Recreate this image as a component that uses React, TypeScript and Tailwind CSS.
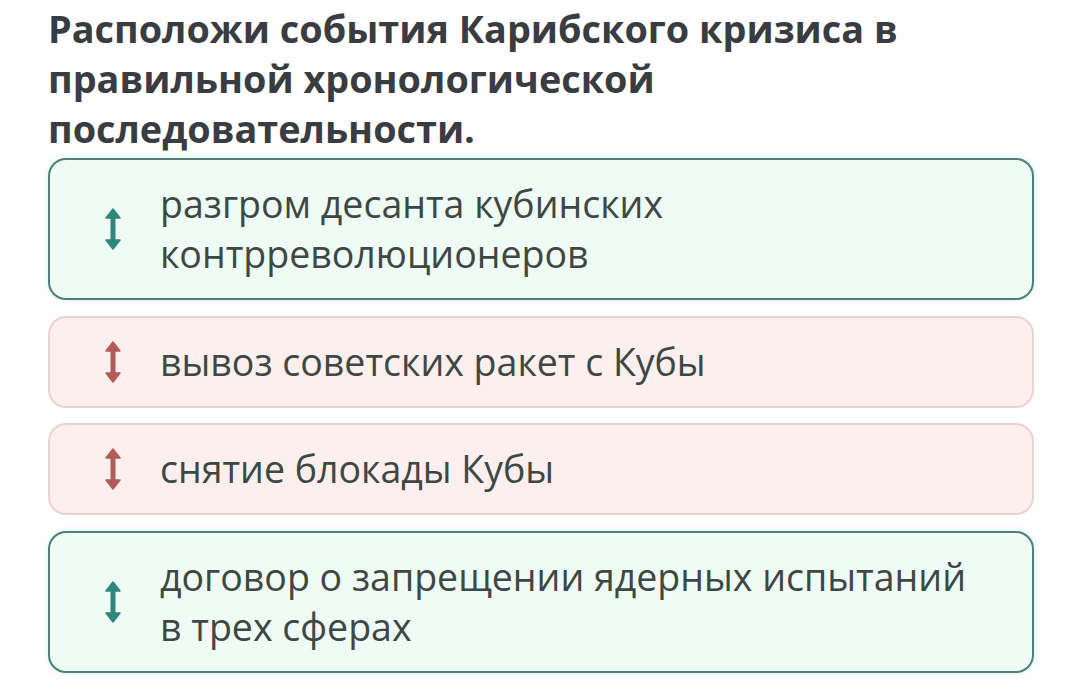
import type React from "react"

type Tone = "green" | "red"

interface Item {
  text: string
  tone: Tone
}

const items: Item[] = [
  { text: "разгром десанта кубинских контрреволюционеров", tone: "green" },
  { text: "вывоз советских ракет с Кубы", tone: "red" },
  { text: "снятие блокады Кубы", tone: "red" },
  { text: "договор о запрещении ядерных испытаний в трех сферах", tone: "green" },
]

// vertical double arrow used as drag handle
const DragArrow: React.FC<{ color: string }> = ({ color }) => (
  <svg width="18" height="42" viewBox="0 0 18 42" fill={color}>
    <rect x="6.5" y="8" width="5" height="26" rx="1" />
    <path d="M9 1 L16 10 L2 10 Z" strokeLinejoin="round" stroke={color} strokeWidth="1.5" />
    <path d="M9 41 L16 32 L2 32 Z" strokeLinejoin="round" stroke={color} strokeWidth="1.5" />
  </svg>
)

const Card: React.FC<{ item: Item }> = ({ item }) => {
  const green = item.tone === "green"
  return (
    <div
      className={
        green
          ? "flex items-center rounded-[18px] border-2 border-[#4f7f79] bg-[#effbf5] py-[19px] shadow-[0_0_6px_rgba(180,235,225,0.6)]"
          : "flex items-center rounded-[18px] border-2 border-[#ecd3d1] bg-[#fcefee] py-[19px]"
      }
    >
      <div className="flex w-[110px] shrink-0 justify-center pl-[16px]">
        <DragArrow color={green ? "#2e877c" : "#b35b59"} />
      </div>
      <div className="pr-[50px] text-[37.5px] leading-[50px] text-[#3e4744]">{item.text}</div>
    </div>
  )
}

export default function App() {
  return (
    <div className="min-h-[696px] w-[1065px] bg-white pl-[48px] pt-[4px] font-['Open_Sans',sans-serif]">
      <div className="w-[986px]">
        <h1 className="text-[37.8px] font-bold leading-[50px] text-[#393c41]">
          Расположи события Карибского кризиса в правильной хронологической последовательности.
        </h1>
        <div className="mt-[4px] flex flex-col gap-[15.5px]">
          {items.map((item) => (
            <Card key={item.text} item={item} />
          ))}
        </div>
      </div>
    </div>
  )
}
